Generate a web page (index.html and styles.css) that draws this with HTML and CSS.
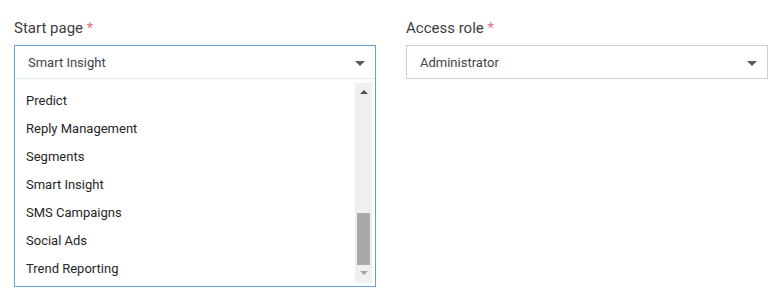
FILE: index.html
```html
<!DOCTYPE html>
<html lang="en">
<head>
    <meta charset="UTF-8">
    <meta name="viewport" content="width=device-width, initial-scale=1.0">
    <title>User settings</title>
    <link rel="stylesheet" href="styles.css">
</head>
<body>
    <form class="settings-form" action="#" method="post" onsubmit="return false;">
        <div class="form-group">
            <label class="field-label">Start page <span class="required">*</span></label>
            <div class="select-wrap is-open">
                <div class="select-box">
                    <span class="select-value">Smart Insight</span>
                    <span class="select-caret"></span>
                </div>
                <div class="select-menu">
                    <ul class="menu-list">
                        <li>Predict</li>
                        <li>Reply Management</li>
                        <li>Segments</li>
                        <li>Smart Insight</li>
                        <li>SMS Campaigns</li>
                        <li>Social Ads</li>
                        <li>Trend Reporting</li>
                    </ul>
                    <div class="scrollbar">
                        <span class="scroll-btn scroll-up"></span>
                        <div class="scroll-track">
                            <div class="scroll-thumb"></div>
                        </div>
                        <span class="scroll-btn scroll-down"></span>
                    </div>
                </div>
            </div>
        </div>
        <div class="form-group">
            <label class="field-label">Access role <span class="required">*</span></label>
            <div class="select-wrap">
                <div class="select-box">
                    <span class="select-value">Administrator</span>
                    <span class="select-caret"></span>
                </div>
            </div>
        </div>
    </form>
</body>
</html>
```

FILE: styles.css
```css
body {
    margin: 0;
    padding: 19px 14px 0 14px;
    font-family: Roboto, "Liberation Sans", Arial, sans-serif;
    background-color: #ffffff;
}
.settings-form {
    display: flex;
    align-items: flex-start;
    gap: 30px;
}
.form-group {
    width: 362px;
}
.field-label {
    display: block;
    font-size: 15px;
    line-height: 18px;
    color: #3d3d3d;
    margin-bottom: 8px;
}
.required {
    color: #e2747a;
}
.select-wrap {
    border: 1px solid #cfcfcf;
}
.select-wrap.is-open {
    border-color: #6d9dd6;
    box-shadow: 0 1px 2px rgba(0, 0, 0, 0.08);
}
.select-box {
    display: flex;
    align-items: center;
    justify-content: space-between;
    height: 32px;
    padding: 0 10px 0 13px;
    font-size: 13px;
    color: #444444;
}
.is-open .select-box {
    border-bottom: 1px solid #e6edf6;
}
.select-caret {
    width: 0;
    height: 0;
    border-left: 5px solid transparent;
    border-right: 5px solid transparent;
    border-top: 5px solid #5a5a5a;
    margin-top: 2px;
}
.select-menu {
    display: flex;
    padding: 4px 3px 3px 0;
    background-color: #ffffff;
}
.menu-list {
    flex: 1;
    list-style: none;
    margin: 0;
    padding: 4px 0 0 11px;
}
.menu-list li {
    height: 28px;
    line-height: 28px;
    font-size: 13px;
    color: #262626;
}
.scrollbar {
    width: 17px;
    height: 200px;
    display: flex;
    flex-direction: column;
    align-items: center;
    background-color: #f0f0f0;
}
.scroll-btn {
    width: 0;
    height: 0;
    border-left: 4px solid transparent;
    border-right: 4px solid transparent;
}
.scroll-up {
    margin: 7px 0 6px;
    border-bottom: 4px solid #505050;
}
.scroll-down {
    margin: 6px 0 8px;
    border-top: 4px solid #a3a3a3;
}
.scroll-track {
    flex: 1;
    width: 13px;
    display: flex;
    flex-direction: column;
    justify-content: flex-end;
}
.scroll-thumb {
    height: 52px;
    background-color: #a8a8a8;
}
```
